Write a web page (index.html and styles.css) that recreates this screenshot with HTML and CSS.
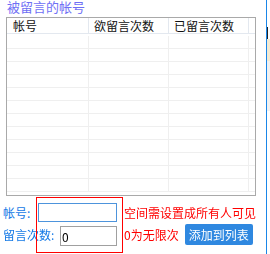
FILE: index.html
```html
<!DOCTYPE html>
<html lang="zh-CN">
<head>
  <meta charset="UTF-8">
  <title>被留言的帐号</title>
  <link rel="stylesheet" href="styles.css">
</head>
<body>
  <div class="panel">
    <div class="group-title">被留言的帐号</div>

    <!-- 帐号列表 -->
    <div class="list">
      <div class="list-head">
        <span>帐号</span>
        <span>欲留言次数</span>
        <span>已留言次数</span>
        <span></span>
      </div>
      <div class="list-body" id="listBody"></div>
    </div>

    <!-- 添加帐号 -->
    <div class="form">
      <div class="form-row row-account">
        <label class="label label-account" for="account">帐号:</label>
        <input class="input input-account" id="account" type="text" autofocus>
        <span class="hint">空间需设置成所有人可见</span>
      </div>
      <div class="form-row row-count">
        <label class="label label-count" for="count">留言次数:</label>
        <input class="input input-count" id="count" type="text" value="0">
        <span class="hint">0为无限次</span>
        <button class="btn-add" type="button">添加到列表</button>
      </div>
    </div>

    <div class="mark"></div>
  </div>
  <div class="edge"></div>
  <div class="side">
    <div class="side-dark"></div>
    <div class="side-tan"></div>
    <div class="side-gray"></div>
  </div>

  <script>
    // 空行
    const listBody = document.getElementById('listBody');
    for (let i = 0; i < 12; i++) {
      const row = document.createElement('div');
      row.className = 'list-row';
      row.innerHTML = '<span></span><span></span><span></span><span></span>';
      listBody.appendChild(row);
    }
  </script>
</body>
</html>
```

FILE: styles.css
```css
body {
  margin: 0;
  width: 270px;
  height: 254px;
  overflow: hidden;
  display: flex;
  background-color: #fff;
  font-family: "Noto Sans CJK SC", "Liberation Sans", sans-serif;
  font-size: 12px;
}
.panel {
  width: 266px;
  position: relative;
}
.group-title {
  height: 17px;
  padding-left: 7px;
  font-size: 13px;
  line-height: 14px;
  color: #6f6ff5;
}
.list {
  margin-left: 6px;
  width: 250px;
  height: 179px;
  border: 1px solid #a9a9a9;
  box-sizing: border-box;
  overflow: hidden;
}
.list-head,
.list-row {
  display: grid;
  grid-template-columns: 82px 80px 80px 1fr;
}
.list-head {
  height: 16px;
  border-bottom: 1px solid #e3e8ef;
  box-sizing: border-box;
  color: #111;
}
.list-head span {
  border-right: 1px solid #e3e8ef;
  padding: 1px 0 0 5px;
  line-height: 14px;
}
.list-head span:first-child {
  padding-left: 6px;
}
.list-body {
  padding-top: 2px;
}
.list-row {
  height: 13px;
  border-bottom: 1px solid #efefef;
  box-sizing: border-box;
}
.list-row span {
  border-right: 1px solid #efefef;
}
.list-head span:last-child,
.list-row span:last-child {
  border-right: none;
}
.form {
  padding-top: 7px;
}
.form-row {
  display: flex;
  padding-left: 3px;
}
.row-account {
  height: 19px;
  align-items: center;
}
.row-count {
  height: 22px;
  margin-top: 2px;
  align-items: flex-start;
}
.label {
  color: #1479e6;
}
.label-account {
  width: 35px;
}
.label-count {
  width: 57px;
  line-height: 22px;
}
.input {
  box-sizing: border-box;
  border: 1px solid #a0a0a0;
  padding: 0 1px;
  font-family: inherit;
  font-size: 12px;
  color: #000;
  outline: none;
}
.input-account {
  width: 79px;
  height: 19px;
  border-color: #4d94dc;
}
.input-count {
  width: 57px;
  height: 20px;
  margin-top: 2px;
}
.hint {
  margin-left: 7px;
  color: #f00;
}
.row-count .hint {
  line-height: 21px;
}
.btn-add {
  margin-left: 6px;
  width: 68px;
  height: 21px;
  padding: 0;
  border: none;
  border-radius: 2px;
  background-color: #2f88e0;
  color: #fff;
  font-family: inherit;
  font-size: 12px;
}
.mark {
  position: absolute;
  left: 36px;
  top: 197px;
  width: 87px;
  height: 56px;
  border: 1px solid #f00;
  box-sizing: border-box;
  pointer-events: none;
}
.edge {
  width: 1px;
  background-color: #1a86e8;
}
.side {
  flex: 1;
  padding-top: 27px;
  background-color: #fff;
}
.side-dark {
  width: 1px;
  height: 12px;
  background-color: #222;
}
.side-tan {
  height: 22px;
  background-color: #f4ead3;
}
.side-gray {
  height: 50px;
  background-color: #f1f1f1;
}
```
